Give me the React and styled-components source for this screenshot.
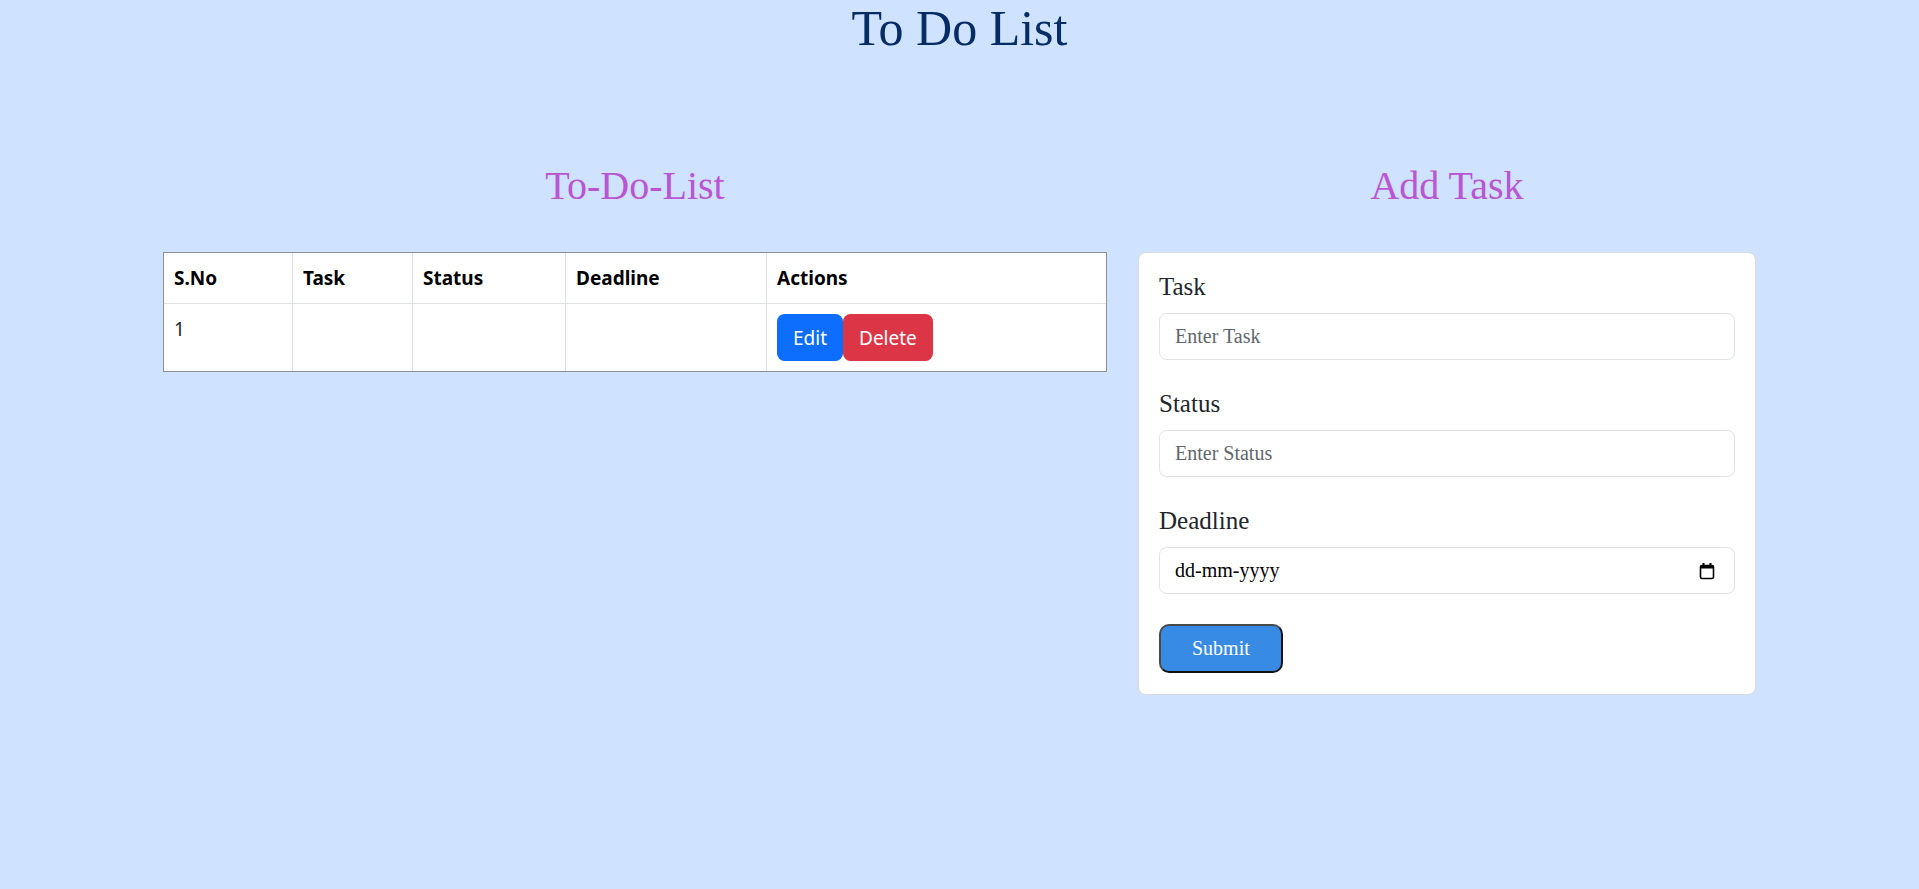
import React from "react";
import styled, { createGlobalStyle } from "styled-components";

const GlobalStyle = createGlobalStyle`
  html, body {
    margin: 0;
    padding: 0;
  }
  body {
    background: #cfe2ff;
    font-family: "Liberation Serif", "Times New Roman", serif;
    color: #212529;
  }
`;

const Page = styled.div`
  min-height: 889px;
  background: #cfe2ff;
`;

const Title = styled.h1`
  margin: 0;
  text-align: center;
  font-size: 50px;
  line-height: 56px;
  font-weight: 400;
  color: #052c65;
`;

const Columns = styled.div`
  display: grid;
  grid-template-columns: 944px 618px;
  column-gap: 31px;
  justify-content: center;
  align-items: start;
  margin-top: 106px;
`;

const Column = styled.section`
  display: flex;
  flex-direction: column;
`;

const SectionTitle = styled.h2`
  margin: 0 0 42px;
  text-align: center;
  font-size: 40px;
  line-height: 48px;
  font-weight: 400;
  color: #ba55d3;
`;

const TableFrame = styled.div`
  border: 1px solid #8f8f8f;
  background: #fff;
`;

const Table = styled.table`
  width: 100%;
  border-collapse: collapse;
  border-style: hidden;
  table-layout: fixed;
  font-family: "Noto Sans", "Open Sans", sans-serif;
  font-size: 19px;
  line-height: 30px;
  color: #000;
`;

const Col = styled.col`
  width: ${(p) => p.$w}px;
`;

const Th = styled.th`
  text-align: left;
  font-weight: 700;
  padding: 10px;
  border: 1px solid #dee2e6;
  vertical-align: top;
`;

const Td = styled.td`
  padding: 10px;
  border: 1px solid #dee2e6;
  vertical-align: top;
  color: #212529;
`;

const ActionButton = styled.button`
  font-family: "Noto Sans", "Open Sans", sans-serif;
  font-size: 19px;
  line-height: 30px;
  padding: 7.5px 15px;
  border: 1px solid transparent;
  border-radius: 7.5px;
  color: #fff;
  background: ${(p) => (p.$danger ? "#dc3545" : "#0d6efd")};
  cursor: pointer;
  vertical-align: middle;
`;

const Card = styled.form`
  background: #fff;
  border: 1px solid #dcdcdc;
  border-radius: 8px;
  padding: 19px 20px 21px;
`;

const Field = styled.div`
  margin-bottom: 29px;
`;

const Label = styled.label`
  display: block;
  font-size: 25px;
  line-height: 30px;
  margin-bottom: 11px;
  color: #212529;
`;

const TextInput = styled.input`
  display: block;
  width: 100%;
  box-sizing: border-box;
  height: 47px;
  padding: 0 15px;
  font-family: "Liberation Serif", "Times New Roman", serif;
  font-size: 20px;
  color: #212529;
  background: #fff;
  border: 1px solid #dee2e6;
  border-radius: 7.5px;
  outline: none;

  &::placeholder {
    color: #5f666d;
  }
`;

const DateBox = styled.div`
  display: flex;
  align-items: center;
  box-sizing: border-box;
  height: 47px;
  padding: 0 19px 0 15px;
  background: #fff;
  border: 1px solid #dee2e6;
  border-radius: 7.5px;
`;

const DateText = styled.input`
  flex: 1;
  min-width: 0;
  border: none;
  padding: 0;
  outline: none;
  background: transparent;
  font-family: "Liberation Serif", "Times New Roman", serif;
  font-size: 20px;
  color: #000;

  &::placeholder {
    color: #000;
  }
`;

const SubmitButton = styled.button`
  margin-top: 1px;
  height: 49px;
  padding: 0 31px;
  font-family: "Liberation Serif", "Times New Roman", serif;
  font-size: 20px;
  color: #fff;
  background: #388be5;
  border: 2px solid;
  border-color: #4a4a4a #111 #111 #4a4a4a;
  border-radius: 10px;
  cursor: pointer;
`;

const CalendarIcon = () => (
  <svg width="16" height="18" viewBox="0 0 16 18">
    <path d="M4.5 1v3M11.5 1v3" stroke="#000" strokeWidth="2" />
    <rect x="1.5" y="3.5" width="13" height="13" rx="1.5" fill="none" stroke="#000" strokeWidth="1.6" />
    <rect x="1.5" y="3.5" width="13" height="3" fill="#000" />
  </svg>
);

const tasks = [{ id: 1, task: "", status: "", deadline: "" }];

export default function App() {
  return (
    <Page>
      <GlobalStyle />
      <Title>To Do List</Title>
      <Columns>
        <Column>
          <SectionTitle>To-Do-List</SectionTitle>
          <TableFrame>
            <Table>
              <colgroup>
                <Col $w={128.5} />
                <Col $w={120} />
                <Col $w={153} />
                <Col $w={201} />
                <Col $w={339.5} />
              </colgroup>
              <thead>
                <tr>
                  <Th>S.No</Th>
                  <Th>Task</Th>
                  <Th>Status</Th>
                  <Th>Deadline</Th>
                  <Th>Actions</Th>
                </tr>
              </thead>
              <tbody>
                {tasks.map((t) => (
                  <tr key={t.id}>
                    <Td>{t.id}</Td>
                    <Td>{t.task}</Td>
                    <Td>{t.status}</Td>
                    <Td>{t.deadline}</Td>
                    <Td>
                      <ActionButton type="button">Edit</ActionButton>
                      <ActionButton type="button" $danger>Delete</ActionButton>
                    </Td>
                  </tr>
                ))}
              </tbody>
            </Table>
          </TableFrame>
        </Column>
        <Column>
          <SectionTitle>Add Task</SectionTitle>
          <Card onSubmit={(e) => e.preventDefault()}>
            <Field>
              <Label htmlFor="task">Task</Label>
              <TextInput id="task" placeholder="Enter Task" />
            </Field>
            <Field>
              <Label htmlFor="status">Status</Label>
              <TextInput id="status" placeholder="Enter Status" />
            </Field>
            <Field>
              <Label htmlFor="deadline">Deadline</Label>
              <DateBox>
                <DateText id="deadline" placeholder="dd-mm-yyyy" />
                <CalendarIcon />
              </DateBox>
            </Field>
            <SubmitButton type="submit">Submit</SubmitButton>
          </Card>
        </Column>
      </Columns>
    </Page>
  );
}
